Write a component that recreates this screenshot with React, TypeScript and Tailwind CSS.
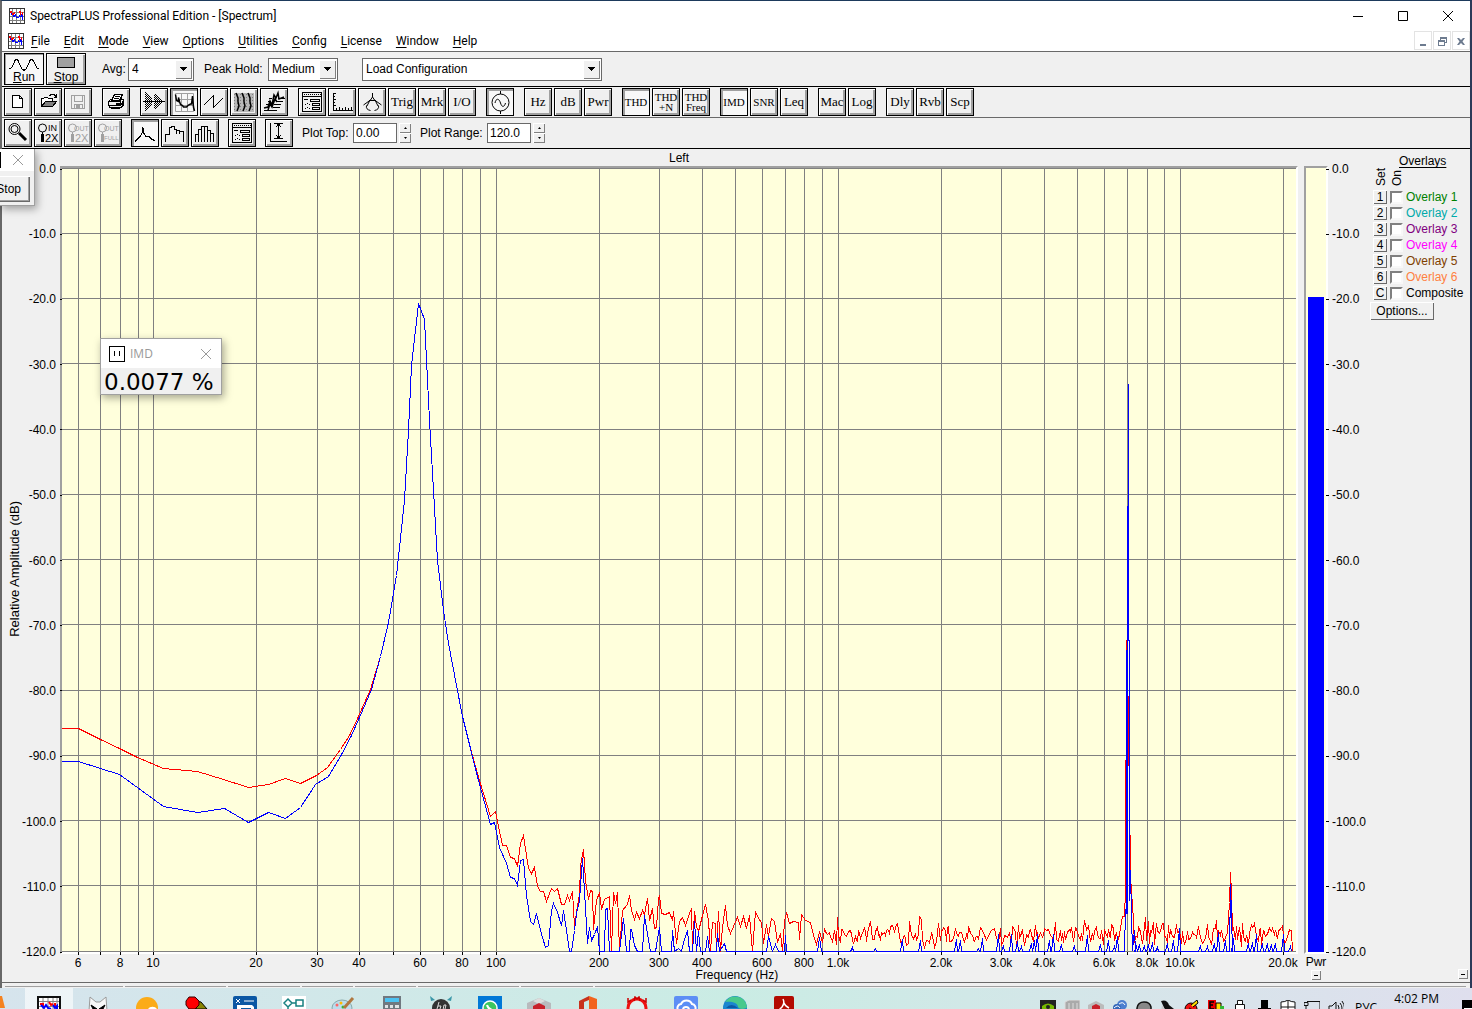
import clsx from "clsx";
import type { FC, ReactNode } from "react";

type Point = [number, number];

const DECADE = 342.1;
const freqToX = (freq: number) => Math.floor(153.95 + DECADE * (Math.log10(freq) - 1));
const PLOT = { height: 784, left: 62, top: 168, width: 1234 };

const GRID_FREQS = [6, 7, 8, 9].concat(
  ...[10, 100, 1000].map((base) => Array.from({ length: 9 }, (_, i) => base * (i + 1))),
  [10000, 20000],
);

const FREQ_LABELS: [number, string][] = [
  [6, "6"],
  [8, "8"],
  [10, "10"],
  [20, "20"],
  [30, "30"],
  [40, "40"],
  [60, "60"],
  [80, "80"],
  [100, "100"],
  [200, "200"],
  [300, "300"],
  [400, "400"],
  [600, "600"],
  [800, "800"],
  [1000, "1.0k"],
  [2000, "2.0k"],
  [3000, "3.0k"],
  [4000, "4.0k"],
  [6000, "6.0k"],
  [8000, "8.0k"],
  [10000, "10.0k"],
  [20000, "20.0k"],
];

const LEVELS = Array.from({ length: 13 }, (_, i) => (i === 0 ? "0.0" : `-${i * 10}.0`));

const RED_LOW: Point[] = [
  [62, 728], [79, 728], [101, 739], [120, 748], [138, 757], [164, 768], [198, 771], [224, 779], [249, 787],
  [269, 784], [286, 778], [301, 783], [317, 775], [328, 767], [341, 749], [350, 735], [359, 716], [371, 689],
];
const BLUE_LOW: Point[] = [
  [62, 761], [79, 761], [101, 768], [120, 774], [164, 806], [198, 812], [225, 808], [249, 822], [269, 812],
  [286, 818], [301, 807], [316, 784], [329, 776], [341, 756], [352, 735], [360, 717], [372, 689],
];
const MAIN_PEAK: Point[] = [
  [381, 656], [389, 622], [397, 575], [405, 500], [409, 430], [412, 365], [419, 303], [425, 319], [430, 420],
  [434, 490], [438, 560], [444, 610], [449, 643], [457, 685], [463, 716], [471, 748],
];
const RED_MID: Point[] = [
  [480, 780], [484, 793], [491, 816], [496, 811], [499, 826], [503, 845], [507, 845], [511, 857], [515, 858],
  [518, 866], [521, 843], [524, 835], [527, 855], [529, 868], [532, 873], [535, 867], [538, 886], [541, 891],
  [544, 891], [547, 901], [552, 888], [555, 891], [558, 888], [562, 904], [565, 904], [568, 895], [570, 900],
  [573, 891], [575, 926], [578, 905], [580, 894], [581, 865], [584, 849], [586, 880], [589, 899], [591, 890],
  [593, 891], [594, 929], [597, 900], [600, 892], [602, 909], [605, 899], [610, 896], [612, 951], [614, 892],
  [616, 903], [618, 892], [620, 951], [623, 910], [628, 904], [630, 895], [632, 910], [635, 919], [637, 912],
  [640, 918], [643, 910], [645, 914], [648, 898], [650, 920], [653, 908], [655, 928], [657, 927], [659, 899],
  [660, 895], [662, 913], [666, 914], [670, 912], [673, 920], [674, 911], [677, 943], [680, 921], [683, 917],
  [686, 925], [690, 913], [692, 908], [693, 951], [695, 911], [697, 926], [699, 931], [702, 919], [706, 904],
  [709, 920], [711, 951], [713, 922], [716, 923], [717, 951], [719, 911], [721, 951], [723, 927], [726, 905],
  [728, 925], [731, 933], [734, 926], [738, 917], [741, 926], [744, 916], [747, 928], [750, 915], [753, 951],
  [756, 911], [759, 918], [762, 922], [764, 943], [767, 924], [769, 936], [772, 918], [775, 921], [778, 942],
  [781, 933], [783, 951], [785, 921], [787, 912], [790, 923], [794, 921], [799, 922], [800, 939], [802, 914],
  [806, 920], [811, 922], [814, 935], [817, 944], [820, 931], [823, 942],
];
const BLUE_MID: Point[] = [
  [479, 780], [491, 824], [495, 822], [500, 847], [507, 863], [511, 877], [515, 878], [518, 885], [521, 860],
  [524, 859], [527, 895], [531, 921], [534, 924], [537, 913], [541, 930], [546, 947], [549, 945], [552, 910],
  [554, 903], [558, 912], [562, 925], [564, 910], [567, 930], [570, 951], [572, 951], [575, 930], [577, 913],
  [580, 900], [583, 858], [585, 890], [588, 943], [590, 927], [592, 940], [595, 934], [598, 926], [600, 951],
  [605, 951], [606, 909], [608, 908], [610, 951], [620, 951], [624, 918], [627, 951], [630, 951], [631, 929],
  [632, 929], [635, 945], [638, 951], [643, 951], [645, 915], [649, 940], [651, 951], [656, 951], [660, 927],
  [662, 951], [672, 951], [673, 930], [675, 951], [679, 948], [682, 951], [684, 942], [688, 930], [690, 951],
  [693, 951], [695, 921], [697, 951], [699, 931], [701, 951], [706, 951], [708, 936], [710, 951], [717, 951],
  [718, 933], [720, 951], [725, 943], [727, 951], [767, 951], [769, 936], [773, 951], [776, 944], [779, 951],
  [785, 951], [786, 935], [787, 951], [818, 951], [820, 937], [822, 951],
];
const BLUE_SPIKES: Point[] = [
  [853, 947], [876, 948], [903, 939], [921, 940], [957, 939], [961, 940], [979, 948], [983, 938], [999, 934],
  [1004, 945], [1012, 934], [1018, 941], [1022, 946], [1032, 943], [1035, 940], [1038, 934], [1050, 940],
  [1054, 934], [1062, 944], [1075, 945], [1088, 935], [1101, 944], [1109, 940], [1115, 946], [1118, 936],
];
const HIGH_SPIKES: Point[] = [
  [1137, 946], [1140, 944], [1145, 945], [1149, 944], [1153, 942], [1158, 947], [1168, 943], [1174, 940],
  [1180, 928], [1201, 945], [1208, 946], [1215, 943], [1219, 932], [1226, 940],
];
const LAST_SPIKES: Point[] = [
  [1234, 938], [1249, 943], [1253, 942], [1257, 934], [1263, 943], [1268, 943], [1272, 944], [1276, 943],
  [1284, 934], [1291, 946],
];

const makeRandom = (seed: number) => {
  let state = seed;
  return () => {
    state = (state * 1664525 + 1013904223) % 4294967296;
    return state / 4294967296;
  };
};

const noise = (from: number, to: number, seed: number): Point[] => {
  const random = makeRandom(seed);
  const points: Point[] = [];
  for (let x = from; x < to; x += random() > 0.5 ? 1 : 2) {
    const kick = random() > 0.93 ? -9 : 0;
    points.push([x, 934 + (random() + random() - 1) * 14 + kick]);
  }
  return points;
};

const spikes = (tops: Point[]): Point[] =>
  tops.flatMap(([x, y]): Point[] => [
    [x - 2, 951],
    [x, y],
    [x + 1, 951],
  ]);

const RED_TRACE: Point[] = [
  ...RED_LOW,
  ...MAIN_PEAK,
  ...RED_MID,
  ...noise(825, 1122, 11),
  [1123, 916], [1125, 916], [1126, 890], [1127, 640], [1128, 660], [1131, 869], [1132, 898], [1133, 899], [1134, 925],
  ...noise(1135, 1229, 29),
  [1230, 902], [1231, 872], [1232, 893], [1233, 930],
  ...noise(1234, 1293, 47),
  [1293, 951],
];
const BLUE_TRACE: Point[] = [
  ...BLUE_LOW,
  ...MAIN_PEAK,
  ...BLUE_MID,
  ...spikes(BLUE_SPIKES),
  [1125, 951], [1126, 909], [1127, 913], [1127, 650], [1128, 913], [1128, 640], [1129, 384], [1129, 640],
  [1130, 640], [1130, 900], [1131, 870], [1132, 916], [1133, 950], [1135, 930], [1136, 951],
  ...spikes(HIGH_SPIKES),
  [1230, 951], [1231, 884], [1232, 915], [1233, 951],
  ...spikes(LAST_SPIKES),
];

const toPoints = (points: Point[]) => points.map(([x, y]) => `${x - 0.5},${y + 0.5}`).join(" ");

const MENUS = ["File", "Edit", "Mode", "View", "Options", "Utilities", "Config", "License", "Window", "Help"];

const OVERLAYS = [
  { color: "text-[#008000]", id: "1", name: "Overlay 1" },
  { color: "text-[#00aaaa]", id: "2", name: "Overlay 2" },
  { color: "text-[#800080]", id: "3", name: "Overlay 3" },
  { color: "text-[#ff00ff]", id: "4", name: "Overlay 4" },
  { color: "text-[#804000]", id: "5", name: "Overlay 5" },
  { color: "text-[#ff8040]", id: "6", name: "Overlay 6" },
  { color: "text-black", id: "C", name: "Composite" },
];

const Glyph: FC<{ children: ReactNode; smooth?: boolean }> = ({ children, smooth = false }) => (
  <svg
    aria-hidden="true"
    className="size-[26px] shrink-0"
    fill="none"
    shapeRendering={smooth ? "auto" : "crispEdges"}
    stroke="currentColor"
    viewBox="1 1 26 26"
  >
    {children}
  </svg>
);

type ToolButtonProps = {
  children: ReactNode;
  disabled?: boolean;
  label: string;
  pressed?: boolean;
  small?: boolean;
};

const ToolButton: FC<ToolButtonProps> = ({ children, disabled = false, label, pressed = false, small = false }) => (
  <button
    aria-label={label}
    aria-pressed={pressed}
    className={clsx(
      "size-7 shrink-0 border border-black flex flex-col items-center justify-center overflow-hidden font-['Liberation_Serif',serif]",
      pressed ? "bg-[#f8f8f8] shadow-[inset_2px_2px_#a0a0a0]" : "bg-[#f0f0f0] shadow-[inset_1px_1px_#fff,inset_-2px_-2px_#a0a0a0]",
      disabled ? "text-[#a0a0a0]" : "text-black",
      small ? "text-[11px] leading-[10px]" : "text-[13px] leading-4",
    )}
    disabled={disabled}
    type="button"
  >
    {children}
  </button>
);

const Group: FC<{ children: ReactNode }> = ({ children }) => <div className="flex gap-0.5">{children}</div>;

const AppIcon: FC = () => (
  <svg aria-hidden="true" className="size-4 shrink-0" shapeRendering="crispEdges" viewBox="0 0 16 16">
    <path d="M0 0h16v16H0z" fill="#fff" />
    <path d="M3.500 0v16M7.500 0v16M11.500 0v16M0 4.500h16M0 8.500h16M0 12.500h16" stroke="#808080" />
    <path d="M1 3h2v2H1zM3 5h2v2H3zM5 4h1v2H5zM10 3h2v2h-2zM11 5h1v2h-1zM13 4h1v3h-1z" fill="#f00" />
    <path d="M2 5h1v2H2zM4 7h2v2H4zM6 6h1v2H6zM7 8h1v2H7zM8 9h2v1H8zM10 7h1v2h-1zM11 8h2v1h-2zM13 7h1v5h-1zM12 6h1v2h-1z" fill="#00f" />
    <path d="M.5 0v16M15.500 0v16M0 .5h16M0 15.500h16" stroke="#333" />
  </svg>
);

const SettingsGlyph: FC = () => (
  <Glyph>
    <path d="M4.500 4.500h19v19h-19zM4 8.500h20" />
    <path d="M6 6.500h17" strokeDasharray="1 1" />
    <path d="M12.500 11.500h9v2h-9zM14.500 15.500h7v2h-7zM14.500 19.500h7v2h-7z" />
    <path d="M6 11.500h4M7 16.500h1m1-1h1m1 1h1M7 20.500h1m1-1h1m1 1h1" />
  </Glyph>
);

const LensGlyph: FC<{ bottom: string; top: string }> = ({ bottom, top }) => (
  <svg aria-hidden="true" className="size-[26px] shrink-0" viewBox="1 1 26 26">
    <circle cx="8.500" cy="9" fill="none" r="4" stroke="currentColor" />
    <path d="M8.500 13v2" stroke="currentColor" />
    <path d="M8.500 15v8" stroke="currentColor" strokeWidth="3" />
    <text fill="currentColor" fontFamily="Liberation Sans" fontSize={top === "IN" ? 9 : 7} x={top === "IN" ? 14 : 10} y="12">
      {top}
    </text>
    <text fill="currentColor" fontFamily="Liberation Sans" fontSize={bottom === "2X" ? 11 : 6} x={bottom === "2X" ? 11 : 10} y={bottom === "2X" ? 23 : 21}>
      {bottom}
    </text>
  </svg>
);

type PickerProps = { className: string; id: string; label: string; value: string };

const Picker: FC<PickerProps> = ({ className, id, label, value }) => (
  <div className={clsx("relative h-[23px]", className)}>
    <select
      aria-label={label}
      className="size-full appearance-none border border-[#696969] bg-white pl-[3px] outline-none"
      defaultValue={value}
      id={id}
    >
      <option>{value}</option>
    </select>
    <span className="pointer-events-none absolute top-0.5 right-0.5 flex h-[19px] w-[17px] items-center justify-center bg-[#f0f0f0] shadow-[inset_1px_1px_#fff,inset_-1px_-1px_#808080]">
      <svg aria-hidden="true" className="h-1 w-[7px]" shapeRendering="crispEdges" viewBox="0 0 7 4">
        <path d="M0 0h7L3.500 4z" />
      </svg>
    </span>
  </div>
);

const Spinner: FC<{ label: string }> = ({ label }) => (
  <div className="ml-0.5 flex w-3 flex-col">
    {["M0 2h3L1.500 0z", "M0 0h3L1.500 2z"].map((path, i) => (
      <button
        aria-label={`${label} ${i === 0 ? "up" : "down"}`}
        className="flex h-2.5 items-center justify-center bg-[#f0f0f0] shadow-[inset_1px_1px_#fff,inset_-1px_-1px_#808080]"
        key={path}
        type="button"
      >
        <svg aria-hidden="true" className="h-0.5 w-[3px]" viewBox="0 0 3 2">
          <path d={path} />
        </svg>
      </button>
    ))}
  </div>
);

const TitleBar: FC = () => (
  <div className="flex h-[29px] items-center pl-[7px] font-['Roboto',sans-serif]">
    <AppIcon />
    <h1 className="ml-[5px] flex-1 text-xs">SpectraPLUS Professional Edition - [Spectrum]</h1>
    {[
      { label: "Minimize", path: "M0 5.500h10" },
      { label: "Maximize", path: "M.5 .5h9v9h-9z" },
      { label: "Close", path: "M0 0l10 10M10 0L0 10" },
    ].map(({ label, path }) => (
      <button aria-label={label} className="flex h-full w-[45px] items-center justify-center" key={label} type="button">
        <svg aria-hidden="true" className="size-2.5" fill="none" stroke="#000" viewBox="0 0 10 10">
          <path d={path} />
        </svg>
      </button>
    ))}
  </div>
);

const MenuBar: FC = () => (
  <nav className="flex h-[21px] items-center pl-1.5 font-['Roboto',sans-serif] text-xs">
    <AppIcon />
    <div className="ml-[7px] flex flex-1 gap-3.5">
      {MENUS.map((menu) => (
        <button key={menu} type="button">
          <span className="underline underline-offset-2">{menu[0]}</span>
          {menu.slice(1)}
        </button>
      ))}
    </div>
    <div className="flex gap-px">
      {[
        { label: "Minimize document", path: "M2 8h6v2H2z" },
        { label: "Restore document", path: "M3 1h7v6H8V6h1V3H4v1H3zM1 4h7v6H1zm1 2v3h5V6z" },
        { label: "Close document", path: "M1 2h2l2 2 2-2h2L6.500 5.500 9 9H7L5 7 3 9H1l2.500-3.500z" },
      ].map(({ label, path }) => (
        <button
          aria-label={label}
          className="flex h-[19px] w-[18px] items-center justify-center border border-[#e3e3e3]"
          key={label}
          type="button"
        >
          <svg aria-hidden="true" className="size-2.5" fill="#6d7b8f" fillRule="evenodd" viewBox="0 0 10 10">
            <path d={path} />
          </svg>
        </button>
      ))}
    </div>
  </nav>
);

const RunBar: FC = () => (
  <div className="flex h-[35px] items-center border-t border-[#696969] pl-0.5">
    <button
      className="h-8 w-10 border border-black bg-[#f8f8f8] leading-3 shadow-[inset_1px_1px_#a0a0a0]"
      type="button"
    >
      <svg aria-hidden="true" className="mx-auto h-4 w-[30px]" fill="none" stroke="#000" viewBox="0 0 30 16">
        <path d="M.5 14L3 12 6.500 4.500h2L13 14l2 1.500L17 14l4.500-9.500h2L28 13l2 1" shapeRendering="crispEdges" />
      </svg>
      <span className="block">
        <u>R</u>un
      </span>
    </button>
    <button
      className="ml-0.5 h-8 w-10 border border-black bg-[#f0f0f0] leading-3 shadow-[inset_1px_1px_#fff,inset_-2px_-2px_#a0a0a0]"
      type="button"
    >
      <span className="mx-auto mt-px mb-[3px] block h-[11px] w-[18px] border border-black bg-[#a0a0a0]" />
      <span className="block">
        <u>S</u>top
      </span>
    </button>
    <label className="ml-4 w-[26px]" htmlFor="avg">
      Avg:
    </label>
    <Picker className="w-[66px]" id="avg" label="Avg" value="4" />
    <label className="ml-2.5 w-16 whitespace-nowrap" htmlFor="peak">
      Peak Hold:
    </label>
    <Picker className="w-[70px]" id="peak" label="Peak Hold" value="Medium" />
    <Picker className="ml-6 w-60" id="config" label="Configuration" value="Load Configuration" />
  </div>
);

const ToolBar: FC = () => (
  <div className="flex h-[31px] items-center gap-2.5 border-t border-black pl-0.5">
    <Group>
      <ToolButton label="New">
        <Glyph>
          <path d="M8.500 7.500h7l3 3v9h-10zM15.500 7.500v3h3" fill="#fff" />
        </Glyph>
      </ToolButton>
      <ToolButton label="Open">
        <Glyph>
          <path d="M7.500 18V10.500h2l1-1h3l1 1h4v3" fill="#fff" />
          <path d="M7.500 18.500l4-5h11l-4 5z" fill="#808080" />
          <path d="M15 7.500h1l1-1h3l2 2M22.500 6v4M20 9.500h3" />
        </Glyph>
      </ToolButton>
      <ToolButton disabled label="Save">
        <Glyph>
          <path d="M7.500 7.500h13v13h-13zM10.500 7.500v6h8v-6M10.500 20.500v-4h8v4" />
          <path d="M12 17h3v3h-3z" fill="currentColor" />
        </Glyph>
      </ToolButton>
    </Group>
    <Group>
      <ToolButton label="Print">
        <Glyph>
          <path d="M9.500 12.500l3-6h8l-3 6z" fill="#fff" />
          <path d="M13 8.500h5M12 10.500h5" />
          <path d="M6.500 13.500l2-2M6.500 13.500h12v4h-12zM7 19.500h11M7.500 17v2l2 1.500h8l4-3.500v-5l-2-1-1 2M18.500 17.500l3-4M18.500 20l3-3" />
          <path d="M14 15h3v1h-3z" fill="#fff" />
          <path d="M20.500 13v5" strokeWidth="2" />
        </Glyph>
      </ToolButton>
    </Group>
    <Group>
      <ToolButton label="Time series">
        <Glyph>
          <path d="M3 13.500h22" />
          <path
            d="M5.500 4v20M7.500 6v16M9.500 8v12M11.500 10v8M15.500 6v16M17.500 8v12M19.500 10v8M21.500 12v4"
            strokeDasharray="1 1"
          />
          <path d="M6.500 5v18M8.500 7v14M10.500 9v10M14.500 7v14M16.500 7v14M18.500 9v10M20.500 11v6" strokeDasharray="1 1" />
        </Glyph>
      </ToolButton>
      <ToolButton label="Spectrum" pressed>
        <Glyph smooth>
          <path d="M5.500 5.500h18v18h-18zM11.500 5v18M17.500 5v18M5 11.500h18M5 17.500h18" stroke="#a0a0a0" />
          <path d="M5.500 6.500l1 6 2 1v-4l1 4 1 3 2 1 1 1.500h3l2-2 2-1h1l1-8 1 11 1 4" strokeWidth="1.500" />
        </Glyph>
      </ToolButton>
      <ToolButton label="Phase">
        <Glyph>
          <path d="M4 17l9-9v12l10-10" />
        </Glyph>
      </ToolButton>
      <ToolButton label="Spectrogram">
        <Glyph smooth>
          <path d="M4 5h20v19H4z" fill="#b8b8b8" stroke="none" />
          <path d="M4 6.500h20M4 9.500h20M4 12.500h20M4 15.500h20M4 18.500h20M4 21.500h20" stroke="#808080" strokeDasharray="1 2" />
          <path d="M6 5l2 5v4l1 4-2 5M12 5l2 5v4l1 4-2 5M18 5l2 5v4l1 4-2 5" strokeWidth="1.500" />
        </Glyph>
      </ToolButton>
      <ToolButton label="3-D surface">
        <Glyph smooth>
          <path d="M4 22.500h13M5 19.500h4m4 0h7M6 16.500h3m5 0h7M8 13.500h3m5 0h7M9 10.500h3m6 0h7" />
          <path d="M4 20l4-1 2-6 2 4 2-10 2 3 2-5 1 6 5-2M8 22l2-6 2 3 3-8 2 3" strokeWidth="1.500" />
        </Glyph>
      </ToolButton>
    </Group>
    <Group>
      <ToolButton label="Settings">
        <SettingsGlyph />
      </ToolButton>
      <ToolButton label="Scaling">
        <Glyph>
          <path d="M5.500 5v17.500h19M5 5.500h3M5 8.500h2M5 11.500h3M5 14.500h2M5 17.500h3M8.500 22v-2M11.500 22v-3M14.500 22v-2M17.500 22v-3M20.500 22v-2M23.500 22v-3" />
        </Glyph>
      </ToolButton>
      <ToolButton label="Calibration">
        <Glyph smooth>
          <path d="M14.500 5v4M14.500 9l-2 3-7 5M14.500 9l2 3 7 5M12 12l-3 6M17 12l3 6M11 12.500h7" />
          <path d="M8.500 17.500q-1 4 4 5M20.500 17.500q1 4-4 5" />
        </Glyph>
      </ToolButton>
      <ToolButton label="Trigger">Trig</ToolButton>
      <ToolButton label="Markers">Mrk</ToolButton>
      <ToolButton label="Input and output">I/O</ToolButton>
    </Group>
    <Group>
      <ToolButton label="Signal generator" pressed>
        <Glyph smooth>
          <circle cx="14.500" cy="14.500" r="8.500" />
          <path d="M14.500 3v3M14.500 23v3M9 15c1-5 4-5 5.500 0s4 4 5 0" />
        </Glyph>
      </ToolButton>
    </Group>
    <Group>
      <ToolButton label="Peak frequency">Hz</ToolButton>
      <ToolButton label="Peak amplitude">dB</ToolButton>
      <ToolButton label="Total power">Pwr</ToolButton>
    </Group>
    <Group>
      <ToolButton label="THD" pressed small>
        THD
      </ToolButton>
      <ToolButton label="THD plus noise" small>
        <span>THD</span>
        <span>+N</span>
      </ToolButton>
      <ToolButton label="THD versus frequency" small>
        <span>THD</span>
        <span>Freq</span>
      </ToolButton>
    </Group>
    <Group>
      <ToolButton label="IMD" pressed small>
        IMD
      </ToolButton>
      <ToolButton label="SNR" small>
        SNR
      </ToolButton>
      <ToolButton label="Leq">Leq</ToolButton>
    </Group>
    <Group>
      <ToolButton label="Macro">Mac</ToolButton>
      <ToolButton label="Data logging">Log</ToolButton>
    </Group>
    <Group>
      <ToolButton label="Delay">Dly</ToolButton>
      <ToolButton label="Reverberation">Rvb</ToolButton>
      <ToolButton label="Scope">Scp</ToolButton>
    </Group>
  </div>
);

const PlotBar: FC = () => (
  <div className="flex h-8 items-center gap-[9px] border-t border-b border-t-[#696969] border-b-black pl-0.5">
    <Group>
      <ToolButton label="Zoom">
        <Glyph smooth>
          <circle cx="10.500" cy="10" r="5.500" />
          <circle cx="10.500" cy="10" r="3.500" />
          <path d="M15 14l7 7" strokeWidth="3" />
        </Glyph>
      </ToolButton>
      <ToolButton label="Zoom in">
        <LensGlyph bottom="2X" top="IN" />
      </ToolButton>
      <ToolButton disabled label="Zoom out">
        <LensGlyph bottom="2X" top="OUT" />
      </ToolButton>
      <ToolButton disabled label="Zoom out full">
        <LensGlyph bottom="FULL" top="OUT" />
      </ToolButton>
    </Group>
    <Group>
      <ToolButton label="Line plot" pressed>
        <Glyph>
          <path d="M4 22.500l3-3 2-2 2-3 1-6 1 6 2 3h3l3 3 3 1" />
        </Glyph>
      </ToolButton>
      <ToolButton label="Octave bars">
        <Glyph>
          <path d="M4.500 23v-7.500h4v-7h2v-1h3v3h2v4M15.500 11.500h3v1h4V23M18.500 12v3" />
        </Glyph>
      </ToolButton>
      <ToolButton label="Narrow bars">
        <Glyph>
          <path d="M4.500 23v-7.500h3v-5h3V7.500h6V11h3v3h3v9M7.500 23V11M10.500 23V8M13.500 23V7M16.500 23V8M19.500 23V11" />
        </Glyph>
      </ToolButton>
    </Group>
    <Group>
      <ToolButton label="Plot options">
        <SettingsGlyph />
      </ToolButton>
    </Group>
    <Group>
      <ToolButton label="Autoscale">
        <Glyph>
          <path d="M5.500 4v18.500h16M9 4.500h9M9 19.500h9M13.500 5v14M11 8l2.500-3L16 8M11 16l2.500 3 2.500-3" />
        </Glyph>
      </ToolButton>
    </Group>
    <div className="flex items-center">
      <label className="w-[51px] whitespace-nowrap" htmlFor="plot-top">
        Plot Top:
      </label>
      <input className="h-5 w-11 border border-[#696969] bg-white pl-0.5 outline-none" defaultValue="0.00" id="plot-top" />
      <Spinner label="Plot top" />
    </div>
    <div className="flex items-center">
      <label className="w-[67px] whitespace-nowrap" htmlFor="plot-range">
        Plot Range:
      </label>
      <input className="h-5 w-11 border border-[#696969] bg-white pl-0.5 outline-none" defaultValue="120.0" id="plot-range" />
      <Spinner label="Plot range" />
    </div>
  </div>
);

const levelTop = (i: number) => ({ top: `${(i / 12) * 100}%` });

const LevelAxis: FC = () => (
  <div className="relative mt-[3px] -mr-0.5 mb-0.5">
    {LEVELS.map((level, i) => (
      <span className="absolute right-0 flex h-4 w-full -translate-y-1/2 items-center justify-end" key={level} style={levelTop(i)}>
        {level}
        <span className="ml-1 h-px w-0.5 bg-black" />
      </span>
    ))}
    <span className="absolute bottom-[315px] left-[5px] rotate-180 text-[13px] leading-4 whitespace-nowrap [writing-mode:vertical-rl]">
      Relative Amplitude (dB)
    </span>
  </div>
);

const PowerAxis: FC = () => (
  <div className="relative mt-[3px] mb-0.5">
    {LEVELS.map((level, i) => (
      <span className="absolute -left-0.5 flex h-4 -translate-y-1/2 items-center" key={level} style={levelTop(i)}>
        <span className="mr-[3px] h-px w-[3px] bg-black" />
        {level}
      </span>
    ))}
  </div>
);

const Plot: FC = () => (
  <div className="border-2 border-t-[#a0a0a0] border-r-white border-b-white border-l-[#a0a0a0] bg-[#ffffdc]">
    <svg
      aria-label="Spectrum of the left channel"
      className="block size-full"
      fill="none"
      preserveAspectRatio="none"
      role="img"
      shapeRendering="crispEdges"
      viewBox={`${PLOT.left} ${PLOT.top} ${PLOT.width} ${PLOT.height}`}
    >
      <g stroke="#808080">
        {GRID_FREQS.map((freq) => {
          const x = freqToX(freq) + 0.5;
          return <line key={freq} x1={x} x2={x} y1={PLOT.top} y2={PLOT.top + PLOT.height} />;
        })}
        {LEVELS.map((level, i) => {
          const y = Math.floor(PLOT.top + i * 65.25) + 0.5;
          return <line key={level} x1={PLOT.left} x2={PLOT.left + PLOT.width} y1={y} y2={y} />;
        })}
      </g>
      <polyline points={toPoints(RED_TRACE)} stroke="#f00" />
      <polyline points={toPoints(BLUE_TRACE)} stroke="#00f" />
    </svg>
  </div>
);

const percentX = (freq: number) => ({ left: `${((freqToX(freq) - 60) / 1238) * 100}%` });

const FrequencyAxis: FC = () => (
  <div className="relative">
    {GRID_FREQS.map((freq) => (
      <span className="absolute -top-0.5 h-[3px] w-px bg-black" key={freq} style={percentX(freq)} />
    ))}
    {FREQ_LABELS.map(([freq, text]) => (
      <span className="absolute top-px -translate-x-1/2 leading-4" key={freq} style={percentX(freq)}>
        {text}
      </span>
    ))}
    <span className="absolute top-[13px] left-[55%] -translate-x-1/2 -ml-1 leading-4">Frequency (Hz)</span>
  </div>
);

const CollapseButton: FC<{ label: string }> = ({ label }) => (
  <button
    aria-label={label}
    className="flex size-2.5 items-center justify-center bg-[#f0f0f0] shadow-[inset_1px_1px_#fff,inset_-1px_-1px_#808080]"
    type="button"
  >
    <span className="h-px w-1 bg-black" />
  </button>
);

const OverlayPanel: FC = () => (
  <aside className="row-span-3 flex flex-col">
    <h2 className="mt-1 ml-[29px] leading-4 underline underline-offset-2">Overlays</h2>
    <div className="ml-[3px] flex h-5 items-end pb-[3px] leading-4">
      <span className="rotate-180 [writing-mode:vertical-rl]">Set</span>
      <span className="rotate-180 [writing-mode:vertical-rl]">On</span>
    </div>
    <ul className="ml-[3px]">
      {OVERLAYS.map(({ color, id, name }) => (
        <li className="flex h-4 items-center" key={id}>
          <button
            aria-label={`Set ${name}`}
            className="h-3.5 w-3.5 bg-[#f0f0f0] leading-3 shadow-[inset_1px_1px_#fff,inset_-1px_-1px_#696969]"
            type="button"
          >
            {id}
          </button>
          <input
            className="ml-[3px] size-[13px] appearance-none border-2 border-t-[#808080] border-r-[#f8f8f8] border-b-[#f8f8f8] border-l-[#808080] bg-white"
            id={`overlay-${id}`}
            type="checkbox"
          />
          <label className={clsx("ml-[3px] whitespace-nowrap", color)} htmlFor={`overlay-${id}`}>
            {name}
          </label>
        </li>
      ))}
    </ul>
    <button
      className="mt-px h-[18px] w-16 bg-[#f0f0f0] leading-4 shadow-[inset_1px_1px_#fff,inset_-1px_-1px_#696969]"
      type="button"
    >
      Options...
    </button>
    <div className="mt-auto mr-0.5 mb-[3px] flex justify-end">
      <CollapseButton label="Collapse overlays" />
    </div>
  </aside>
);

const SpectrumView: FC = () => (
  <main className="grid min-h-0 flex-1 grid-cols-[58px_1fr_6px_24px_42px_100px] grid-rows-[17px_1fr_28px]">
    <div />
    <h2 className="text-center leading-[18px]">Left</h2>
    <div className="col-span-3" />
    <OverlayPanel />
    <LevelAxis />
    <Plot />
    <div />
    <div className="flex flex-col justify-end border-2 border-t-[#a0a0a0] border-r-white border-b-white border-l-[#a0a0a0] bg-[#ffffdc] pr-0.5 pl-0.5">
      <div className="bg-[#00f]" style={{ height: `${((951 - 297) / 783) * 100}%` }} />
    </div>
    <PowerAxis />
    <div />
    <FrequencyAxis />
    <div />
    <div className="flex flex-col items-center">
      <span className="leading-4">Pwr</span>
      <CollapseButton label="Collapse power" />
    </div>
  </main>
);

const STATUS_WIDTHS = [118, 101, 72, 51, 61, 101, 72];

const StatusBar: FC = () => (
  <div className="flex h-1.5 items-end gap-0.5 border-t border-[#696969] bg-[#f0f0f0] pr-1 pb-px pl-[3px]">
    {STATUS_WIDTHS.map((width, i) => (
      // biome-ignore lint/suspicious/noArrayIndexKey: the panes never move
      <span className="h-px bg-[#a0a0a0]" key={`pane-${i}`} style={{ width }} />
    ))}
    <span className="h-px flex-1 bg-[#a0a0a0]" />
  </div>
);

const CloseMark: FC = () => (
  <svg aria-hidden="true" className="block size-2.5" fill="none" stroke="#999" viewBox="0 0 10 10">
    <path d="M0 0l10 10M10 0L0 10" />
  </svg>
);

const ImdWindow: FC = () => (
  <section className="absolute top-[338px] left-[100px] w-[122px] border border-[#a0a0a0] bg-[#f0f0f0] shadow-[2px_3px_8px_rgba(0,0,0,0.35)]">
    <div className="flex h-[29px] items-center bg-white pr-2.5 pl-2">
      <svg aria-hidden="true" className="size-4" fill="#fff" shapeRendering="crispEdges" stroke="#000" viewBox="0 0 16 16">
        <path d="M.5 .5h15v15H.5zM5.500 5v5M10.500 5v5" />
      </svg>
      <h2 className="ml-[5px] flex-1 font-['Open_Sans',sans-serif] text-xs text-[#999]">IMD</h2>
      <button aria-label="Close IMD" type="button">
        <CloseMark />
      </button>
    </div>
    <p className="h-[26px] pl-[3px] font-['DejaVu_Sans',sans-serif] text-[23px] leading-7 whitespace-nowrap">0.0077 %</p>
  </section>
);

const StopWindow: FC = () => (
  <section className="absolute top-[149px] left-0 flex h-[57px] w-[35px] flex-col overflow-hidden border-r border-b border-[#a0a0a0] bg-[#f0f0f0] shadow-[2px_3px_8px_rgba(0,0,0,0.35)]">
    <div className="flex h-[22px] items-center justify-between bg-white pr-[11px]">
      <span className="h-4 w-px bg-black" />
      <button aria-label="Close controls" type="button">
        <CloseMark />
      </button>
    </div>
    <button
      className="mt-[5px] flex h-[26px] w-[30px] items-center justify-end bg-[#f0f0f0] pr-[9px] shadow-[inset_0_1px_#fff,inset_-1px_-1px_#696969,inset_-2px_-2px_#a0a0a0]"
      type="button"
    >
      Stop
    </button>
  </section>
);

const TASKS: { art: ReactNode; name: string }[] = [
  { art: <path d="M10 0h4l3 12H7z" fill="#f58220" />, name: "Media player" },
  {
    art: (
      <>
        <path d="M1 1h22v24H1z" fill="#fff" stroke="#111" strokeWidth="2" />
        <path d="M6 2v12M11 2v12M16 2v12M20 2v12M2 5.500h20M2 10.500h20" stroke="#888" />
        <path d="M3 8h3v2M12 6l2 3 2-1M18 7v3" stroke="#f00" strokeWidth="2" />
        <path d="M4 9l3 3 2-3 2 3 3 1M16 9l2 3 2-2v4" stroke="#00f" strokeWidth="2" />
      </>
    ),
    name: "SpectraPLUS",
  },
  {
    art: (
      <>
        <path d="M4 1l6 5h4l6-5 1 14H3z" fill="#f8f8f8" stroke="#999" />
        <path d="M5 9l6 4H7zM19 9l-6 4h4z" fill="#000" stroke="#000" />
      </>
    ),
    name: "foobar2000",
  },
  {
    art: (
      <>
        <circle cx="12" cy="12" fill="#fbab18" r="11" />
        <path d="M13 13a5 4 0 0 1 9 0z" fill="#fff" />
      </>
    ),
    name: "Browser",
  },
  {
    art: (
      <>
        <path d="M12 5l5 1 6 7H12z" fill="#8a8400" stroke="#000" />
        <path d="M5 1h6l4 4v4l-4 4H5L2 9V5z" fill="#f00" stroke="#300" />
      </>
    ),
    name: "Shapes",
  },
  {
    art: (
      <>
        <rect fill="#0b57a4" height="24" rx="2" width="24" />
        <path d="M3 3l4 4M7 3L3 7M11 5h10" stroke="#fff" />
        <path d="M4 9h15l2 2v3H4z" fill="#fff" />
        <path d="M8 12h10v2H8z" fill="#0b57a4" />
      </>
    ),
    name: "Calculator tool",
  },
  {
    art: (
      <>
        <path d="M0 0h24v24H0z" fill="#fff" />
        <path d="M2 7l4-4 4 4-4 4zM10 7h4M14 4h7v6h-7zM6 11v3" stroke="#188080" strokeWidth="1.500" />
      </>
    ),
    name: "Flow editor",
  },
  {
    art: (
      <>
        <ellipse cx="11" cy="12" fill="#bcdcec" rx="10" ry="8" stroke="#8aa" />
        <circle cx="6" cy="9" fill="#f66" r="1.500" />
        <circle cx="10" cy="7" fill="#fb0" r="1.500" />
        <circle cx="12" cy="11" fill="#3b3" r="1.500" />
        <path d="M13 12l9-10" stroke="#b07840" strokeWidth="3" />
      </>
    ),
    name: "Paint",
  },
  {
    art: (
      <>
        <path d="M3 0h18v24H3z" fill="#707880" />
        <path d="M5 2h14v4H5z" fill="#4cc2f1" />
        <path d="M5 9h3v3H5zM10 9h3v3h-3zM15 9h4v3h-4z" fill="#dfe3e6" />
      </>
    ),
    name: "Calculator",
  },
  {
    art: (
      <>
        <circle cx="12" cy="12" fill="#333" r="9" />
        <path d="M1 0l5 4-4 1zM23 0l-5 4 4 1z" fill="#3b97a8" />
        <path d="M10 6L8 13M9 10h3l-1 3M15 9h2l-1 4M15 9l-1 5" stroke="#ddd" />
      </>
    ),
    name: "Printer assistant",
  },
  {
    art: (
      <>
        <path d="M0 0h24v24H0z" fill="#0078d7" />
        <circle cx="12" cy="12" fill="#3dc660" r="7" stroke="#fff" strokeWidth="1.500" />
        <path d="M9 9q1 4 5 5" stroke="#fff" strokeWidth="2" />
      </>
    ),
    name: "WhatsApp",
  },
  {
    art: (
      <>
        <path d="M12 2l12 5v6H0V7z" fill="#b8babd" />
        <path d="M12 2l6 3-6 3-6-3z" fill="#ddd" />
        <path d="M12 7l6 3v4H6v-4z" fill="#c8202a" />
      </>
    ),
    name: "Modeler",
  },
  {
    art: (
      <>
        <path d="M3 5l10-5v4L8 6v8H3z" fill="#c8321c" />
        <path d="M13 0l8 3v12h-8z" fill="#f2641e" />
      </>
    ),
    name: "Office",
  },
  {
    art: (
      <>
        <circle cx="12" cy="12" fill="#dff0ee" r="9" stroke="#e11" strokeWidth="3" />
        <path d="M3 2v4l3-2M21 2v4l-3-2M9 5l1-4 2 2 2-2 1 4" stroke="#c00" strokeWidth="1.500" />
      </>
    ),
    name: "Red ring",
  },
  {
    art: (
      <>
        <rect fill="#5c8ef5" height="24" rx="2" width="24" />
        <path d="M4 14a4 4 0 0 1 3-6 6 6 0 0 1 11 0 4 4 0 0 1 3 6M9 14a3 3 0 0 1 6 0" stroke="#fff" strokeWidth="2" />
      </>
    ),
    name: "Cloud",
  },
  {
    art: (
      <>
        <circle cx="12" cy="12" fill="#1b86cf" r="12" />
        <path d="M2 6a12 12 0 0 1 22 5c0 2-8 3-9 0 0-5-8-6-13-5z" fill="#48c98c" />
        <path d="M3 12q5-6 12 0z" fill="#0c59a4" />
      </>
    ),
    name: "Edge",
  },
  {
    art: (
      <>
        <rect fill="#b30b00" height="24" rx="2" width="20" x="2" />
        <path d="M11 3q2 4-1 8l-3 3M12 7q1 3 5 5" stroke="#fff" strokeWidth="1.500" />
      </>
    ),
    name: "Acrobat",
  },
];

const TRAY: { art: ReactNode; name: string }[] = [
  {
    art: (
      <>
        <path d="M0 0h16v16H0z" fill="#222" />
        <path d="M2 6q6-5 12 0v6H2z" fill="#76b900" />
        <circle cx="8" cy="7" fill="#222" r="2" />
      </>
    ),
    name: "Graphics",
  },
  { art: <path d="M1 2l4-2h11v16H1zM5 3v10M9 3v10M13 3v10" fill="#aaa" stroke="#ddd" />, name: "Drives" },
  {
    art: (
      <>
        <path d="M8 1l8 4v6H0V5z" fill="#bbb" />
        <path d="M8 4l4 2v5H4V6z" fill="#c8202a" />
      </>
    ),
    name: "Modeler",
  },
  {
    art: (
      <>
        <circle cx="10" cy="5" fill="#4d7fd0" r="5" />
        <circle cx="5" cy="8" fill="#3366b8" r="4" />
        <path d="M2 8q4-4 6 0M7 4q4-3 6 1" stroke="#fff" />
      </>
    ),
    name: "Sync",
  },
  { art: <path d="M1 8q1-6 7-6t7 5v7H1z" fill="#888" stroke="#111" strokeWidth="1.500" />, name: "Mouse" },
  {
    art: (
      <>
        <path d="M1 1q6-2 8 4l5 4v5H7z" fill="#111" />
        <path d="M2 5l4 6-5 1z" fill="#ccc" />
      </>
    ),
    name: "Speaker",
  },
  {
    art: (
      <>
        <circle cx="7" cy="9" fill="#e11" r="6" stroke="#000" />
        <path d="M7 5l6-5 1 3-5 4M5 8l4 2-3 4" fill="#fd0" stroke="#000" />
      </>
    ),
    name: "Power",
  },
  {
    art: (
      <>
        <path d="M0 0h8v10H0z" fill="#e00" />
        <path d="M6 2H2v7h4M2 5h3" stroke="#000" strokeWidth="1.500" />
        <path d="M8 3h5v9H8z" fill="#fd0" stroke="#000" />
        <path d="M12 6h4v8h-4z" fill="#3b3" />
      </>
    ),
    name: "Energy",
  },
  { art: <path d="M5.500 .5h5v4h-5zM3.500 4.500h9V14h-9z" fill="#fff" stroke="#111" />, name: "USB" },
  { art: <path d="M5 0h7v8h3v8H2V8h3z" fill="#000" />, name: "Microphone" },
  { art: <path d="M1 2q4 0 7-2 3 2 7 2v8l-7 6-7-6zM8 0v15M1 7h14" fill="#fff" stroke="#111" />, name: "Security" },
  { art: <path d="M0 2.500h4v3H0zM3 1.500h13v9H3M2 5v8" stroke="#111" />, name: "Network" },
  { art: <path d="M1 6h3l4-4v12l-4-4H1zM10 5q2 3 0 6M12 3q4 5 0 10M14 1q5 7 0 14" stroke="#111" />, name: "Volume" },
];

const Taskbar: FC = () => (
  <footer className="flex h-[21px] shrink-0 items-start overflow-hidden bg-linear-to-r from-[#d6e4ed] via-[#caece4] to-[#dfdfee] font-['Open_Sans',sans-serif] text-xs">
    <div className="-ml-6 flex gap-px">
      {TASKS.map(({ art, name }) => (
        <button
          aria-label={name}
          className={clsx("flex h-10 w-12 justify-center pt-2", name === "SpectraPLUS" && "bg-white/60")}
          key={name}
          type="button"
        >
          <svg aria-hidden="true" className="size-6" fill="none" viewBox="0 0 24 24">
            {art}
          </svg>
        </button>
      ))}
    </div>
    <div className="ml-auto flex">
      {TRAY.map(({ art, name }) => (
        <button aria-label={name} className="flex h-10 w-6 justify-center pt-3" key={name} type="button">
          <svg aria-hidden="true" className="size-4" fill="none" viewBox="0 0 16 16">
            {art}
          </svg>
        </button>
      ))}
    </div>
    <span className="mt-3 ml-[7px] leading-4">РУС</span>
    <time className="mt-[3px] ml-[17px] leading-4">4:02 PM</time>
    <button aria-label="Notifications" className="mt-3 ml-[23px] h-4 w-2.5 shrink-0 bg-black pt-1 pl-0.5" type="button">
      <span className="block h-px bg-white" />
      <span className="mt-0.5 block h-px bg-white" />
    </button>
  </footer>
);

export default function App() {
  return (
    <div className="relative flex h-screen flex-col overflow-hidden bg-[#f0f0f0] font-['Liberation_Sans',sans-serif] text-xs text-black">
      <div className="flex min-h-0 flex-1 flex-col border-t border-r-2 border-l-2 border-t-[#1d3a5c] border-r-[#2b3a58] border-l-[#686868]">
        <header className="bg-white">
          <TitleBar />
          <MenuBar />
        </header>
        <RunBar />
        <ToolBar />
        <PlotBar />
        <SpectrumView />
        <StatusBar />
      </div>
      <Taskbar />
      <StopWindow />
      <ImdWindow />
    </div>
  );
}
